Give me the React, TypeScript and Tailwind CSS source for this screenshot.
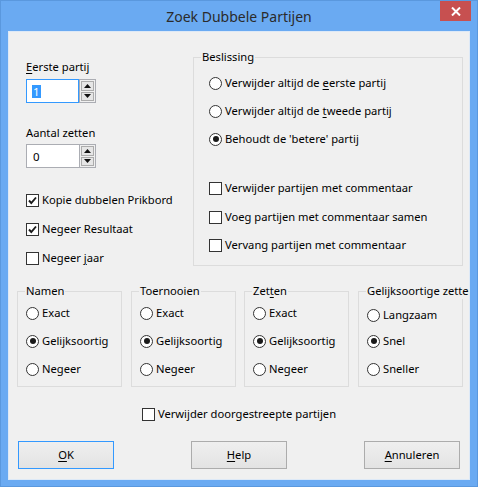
import React from "react";

const font = { fontFamily: '"Noto Sans", "Open Sans", Arial, sans-serif' };

function U({ c }: { c: string }) {
  return <span className="underline underline-offset-[2px] decoration-[1px]">{c}</span>;
}

function Radio({ checked }: { checked?: boolean }) {
  return (
    <span className="w-[13px] h-[13px] rounded-full border border-[#333333] bg-white flex items-center justify-center shrink-0">
      {checked && <span className="w-[6px] h-[6px] rounded-full bg-[#1a1a1a]" />}
    </span>
  );
}

function Check({ checked }: { checked?: boolean }) {
  return (
    <span className="w-[13px] h-[13px] border border-[#333333] bg-white flex items-center justify-center shrink-0">
      {checked && (
        <svg width="11" height="11" viewBox="0 0 11 11">
          <path d="M2 5.5 L4.3 8 L9 2.5" fill="none" stroke="#1a1a1a" strokeWidth="1.9" />
        </svg>
      )}
    </span>
  );
}

function Row({ children, className = "" }: { children: React.ReactNode; className?: string }) {
  return <div className={"flex items-center h-[16px] gap-[3px] text-[11.2px] leading-[16px] text-black whitespace-nowrap " + className}>{children}</div>;
}

function Arrow({ up }: { up?: boolean }) {
  return (
    <svg width="7" height="4" viewBox="0 0 7 4">
      {up ? <polygon points="0,4 7,4 3.5,0" fill="#111" /> : <polygon points="0,0 7,0 3.5,4" fill="#111" />}
    </svg>
  );
}

function Spinner({ value, focused }: { value: string; focused?: boolean }) {
  return (
    <div className="flex h-[24px] w-[70px]">
      <div className={"w-[53px] h-full bg-white border flex items-center pl-[5px] " + (focused ? "border-[#3399ff]" : "border-[#abadb3] border-r-0")}>
        {focused ? (
          <span className="bg-[#3399ff] text-white text-[11.5px] leading-[13px] px-[1px]">{value}</span>
        ) : (
          <span className="text-black text-[11.5px] leading-[13px] pl-[1px]">{value}</span>
        )}
      </div>
      <div className="w-[17px] h-full border border-[#abadb3] bg-[#f0f0f0] flex flex-col gap-[1px] p-[1px]">
        <div className="flex-1 bg-[#e6e6e6] border border-[#acacac] flex items-center justify-center">
          <Arrow up />
        </div>
        <div className="flex-1 bg-[#e6e6e6] border border-[#acacac] flex items-center justify-center">
          <Arrow />
        </div>
      </div>
    </div>
  );
}

function Group({
  title,
  className = "",
  children,
}: {
  title: React.ReactNode;
  className?: string;
  children: React.ReactNode;
}) {
  return (
    <div className={"relative border border-[#dcdcdc] shrink-0 " + className}>
      <div className="absolute left-[7px] top-[-9px] bg-[#f0f0f0] px-[1px] text-[11.2px] leading-[16px] text-black whitespace-nowrap">
        {title}
      </div>
      {children}
    </div>
  );
}

function Button({ children, def }: { children: React.ReactNode; def?: boolean }) {
  return (
    <div
      className={
        "w-[96px] h-[28px] flex items-center justify-center text-[11.2px] text-black bg-gradient-to-b from-[#efefef] to-[#e3e3e3] border " +
        (def ? "border-[#3399ff]" : "border-[#acacac]")
      }
    >
      {children}
    </div>
  );
}

function SmallGroup({
  title,
  items,
  first = 13,
}: {
  title: React.ReactNode;
  items: string[];
  first?: number;
}) {
  return (
    <Group title={title} className="w-[105px] h-[96px]">
      <div className="flex flex-col pl-[8px]" style={{ paddingTop: first }}>
        {items.map((t, i) => (
          <Row key={t} className={i === 0 ? "" : i === 1 && first > 13 ? "mt-[10px]" : "mt-[12px]"}>
            <Radio checked={i === 1} />
            <span>{t}</span>
          </Row>
        ))}
      </div>
    </Group>
  );
}

export default function App() {
  return (
    <div style={font} className="w-[478px] h-[487px] bg-[#6aaaf2] border border-[#5a98de] flex flex-col overflow-hidden">
      <div className="relative h-[30px] flex items-center justify-center shrink-0">
        <span className="text-[14px] text-[#2b2b2b] mt-[1px]">Zoek Dubbele Partijen</span>
        <div className="absolute right-[6px] top-0 w-[31px] h-[20px] bg-[#c75050] flex items-center justify-center">
          <svg width="10" height="9" viewBox="0 0 10 9">
            <path d="M1 0.5 L9 8.5 M9 0.5 L1 8.5" stroke="#fff" strokeWidth="2" />
          </svg>
        </div>
      </div>
      <div className="mx-[7px] h-[449px] bg-[#f0f0f0] border border-[#dde9f7] overflow-hidden flex flex-col shrink-0">
        <div className="flex h-[209px] mt-[25px] shrink-0">
          <div className="w-[184px] pl-[17px] pt-[2px] flex flex-col shrink-0">
            <div className="h-[16px] text-[11.2px] leading-[16px]">
              <U c="E" />erste partij
            </div>
            <div className="mt-[4px]">
              <Spinner value="1" focused />
            </div>
            <div className="h-[16px] text-[11.2px] leading-[16px] mt-[22px]">Aantal zetten</div>
            <div className="mt-[3px]">
              <Spinner value="0" />
            </div>
            <Row className="mt-[24px]">
              <Check checked />
              <span>Kopie dubbelen Prikbord</span>
            </Row>
            <Row className="mt-[13px]">
              <Check checked />
              <span>Negeer Resultaat</span>
            </Row>
            <Row className="mt-[13px]">
              <Check />
              <span>
                Negeer <U c="j" />aar
              </span>
            </Row>
          </div>
          <Group title="Beslissing" className="w-[270px] h-[209px]">
            <div className="flex flex-col pl-[15px] pt-[17px]">
              <Row>
                <Radio />
                <span>
                  Verwijder altijd de <U c="e" />erste partij
                </span>
              </Row>
              <Row className="mt-[12px]">
                <Radio />
                <span>
                  Verwijder altijd de <U c="t" />weede partij
                </span>
              </Row>
              <Row className="mt-[12px]">
                <Radio checked />
                <span>Behoudt de 'betere' partij</span>
              </Row>
              <Row className="mt-[33px]">
                <Check />
                <span>Verwijder partijen met commentaar</span>
              </Row>
              <Row className="mt-[13px]">
                <Check />
                <span>Voeg partijen met commentaar samen</span>
              </Row>
              <Row className="mt-[12px]">
                <Check />
                <span>Vervang partijen met commentaar</span>
              </Row>
            </div>
          </Group>
        </div>
        <div className="flex mt-[25px] pl-[8px] shrink-0">
          <SmallGroup title="Namen" items={["Exact", "Gelijksoortig", "Negeer"]} />
          <div className="ml-[9px]">
            <SmallGroup title="Toernooien" items={["Exact", "Gelijksoortig", "Negeer"]} />
          </div>
          <div className="ml-[8px]">
            <SmallGroup
              title={
                <span>
                  Zet<U c="t" />en
                </span>
              }
              items={["Exact", "Gelijksoortig", "Negeer"]}
            />
          </div>
          <div className="ml-[9px]">
            <SmallGroup title="Gelijksoortige zetten" items={["Langzaam", "Snel", "Sneller"]} first={15} />
          </div>
        </div>
        <div className="flex justify-center mt-[19px] shrink-0">
          <Row>
            <Check />
            <span>Verwijder doorgestreepte partijen</span>
          </Row>
        </div>
        <div className="flex justify-between px-[9px] mt-[19px] shrink-0">
          <Button def>
            <span>
              <U c="O" />K
            </span>
          </Button>
          <Button>
            <span>
              <U c="H" />elp
            </span>
          </Button>
          <Button>
            <span>
              <U c="A" />nnuleren
            </span>
          </Button>
        </div>
      </div>
    </div>
  );
}
